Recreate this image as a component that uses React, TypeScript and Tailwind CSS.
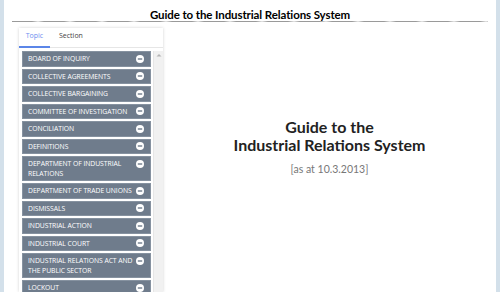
import React from "react";

const items: string[][] = [
  ["BOARD OF INQUIRY"],
  ["COLLECTIVE AGREEMENTS"],
  ["COLLECTIVE BARGAINING"],
  ["COMMITTEE OF INVESTIGATION"],
  ["CONCILIATION"],
  ["DEFINITIONS"],
  ["DEPARTMENT OF INDUSTRIAL", "RELATIONS"],
  ["DEPARTMENT OF TRADE UNIONS"],
  ["DISMISSALS"],
  ["INDUSTRIAL ACTION"],
  ["INDUSTRIAL COURT"],
  ["INDUSTRIAL RELATIONS ACT AND", "THE PUBLIC SECTOR"],
  ["LOCKOUT"],
];

function Minus() {
  return (
    <svg width="8" height="8" viewBox="0 0 8 8" className="shrink-0 mt-[0.5px]">
      <circle cx="4" cy="4" r="4" fill="#ffffff" />
      <rect x="1.8" y="3.3" width="4.4" height="1.4" fill="#6f7c8c" />
    </svg>
  );
}

export default function App() {
  return (
    <div
      className="w-[500px] h-[292px] bg-[#d3e0ea] px-[4px] overflow-hidden"
      style={{ fontFamily: '"Open Sans", sans-serif' }}
    >
      <div className="bg-white h-full flex flex-col">
        <div className="h-[24px] mx-[8px] relative flex justify-center">
          <div
            className="text-[11.5px] font-bold text-black leading-none pt-[9px]"
            style={{ fontFamily: 'Lato, sans-serif', letterSpacing: "-0.1px" }}
          >
            Guide to the Industrial Relations System
          </div>
          <div
            className="absolute left-0 right-0 top-[21px] h-[1px]"
            style={{
              background:
                "repeating-linear-gradient(90deg, #9a9a9a 0px, #9a9a9a 20px, #e2e2e2 26px, #9a9a9a 32px)",
            }}
          />
        </div>
        <div className="flex flex-1 min-h-0 pt-[4px]">
          <div className="ml-[15px] w-[144px] flex flex-col bg-white shadow-[0_0_3px_rgba(0,0,0,0.18)]">
            <div className="h-[20px] flex items-end text-[7px] border-b border-[#e6e6e6]">
              <div className="w-[31px] text-center text-[#6f8ff0] border-b-[2px] border-[#5b86e8] pb-[5px] -mb-[1px]">
                Topic
              </div>
              <div className="ml-[9px] text-[#444] pb-[6px]">Section</div>
            </div>
            <div className="flex flex-1 min-h-0 pt-[3px]">
              <div className="flex-1 flex flex-col gap-[2px] pl-[3px] pr-[2px]">
                {items.map((it, i) => (
                  <div
                    key={i}
                    className="bg-[#6f7c8c] border border-[#8692a0] flex justify-between pl-[5px] pr-[6px] py-[2px] text-white text-[6.8px] leading-[9.5px] shrink-0"
                  >
                    <div className="whitespace-nowrap tracking-[-0.05px]">
                      {it.map((l, j) => (
                        <div key={j}>{l}</div>
                      ))}
                    </div>
                    <Minus />
                  </div>
                ))}
              </div>
              <div className="w-[10px] bg-[#f1f1f1] border-l border-[#e6e6e6] flex justify-center pt-[2px]">
                <svg width="6" height="4" viewBox="0 0 6 4">
                  <path d="M0.5 3.5 L3 1 L5.5 3.5" fill="#b5b5b5" />
                </svg>
              </div>
            </div>
          </div>
          <div className="flex-1 flex flex-col items-center pt-[90px]">
            <div
              className="text-[16px] font-bold text-[#222] leading-[18px] text-center"
              style={{ fontFamily: 'Lato, sans-serif' }}
            >
              <div>Guide to the</div>
              <div>Industrial Relations System</div>
            </div>
            <div
              className="text-[10.5px] text-[#777] mt-[8px]"
              style={{ fontFamily: 'Lato, sans-serif' }}
            >
              [as at 10.3.2013]
            </div>
          </div>
        </div>
      </div>
    </div>
  );
}
